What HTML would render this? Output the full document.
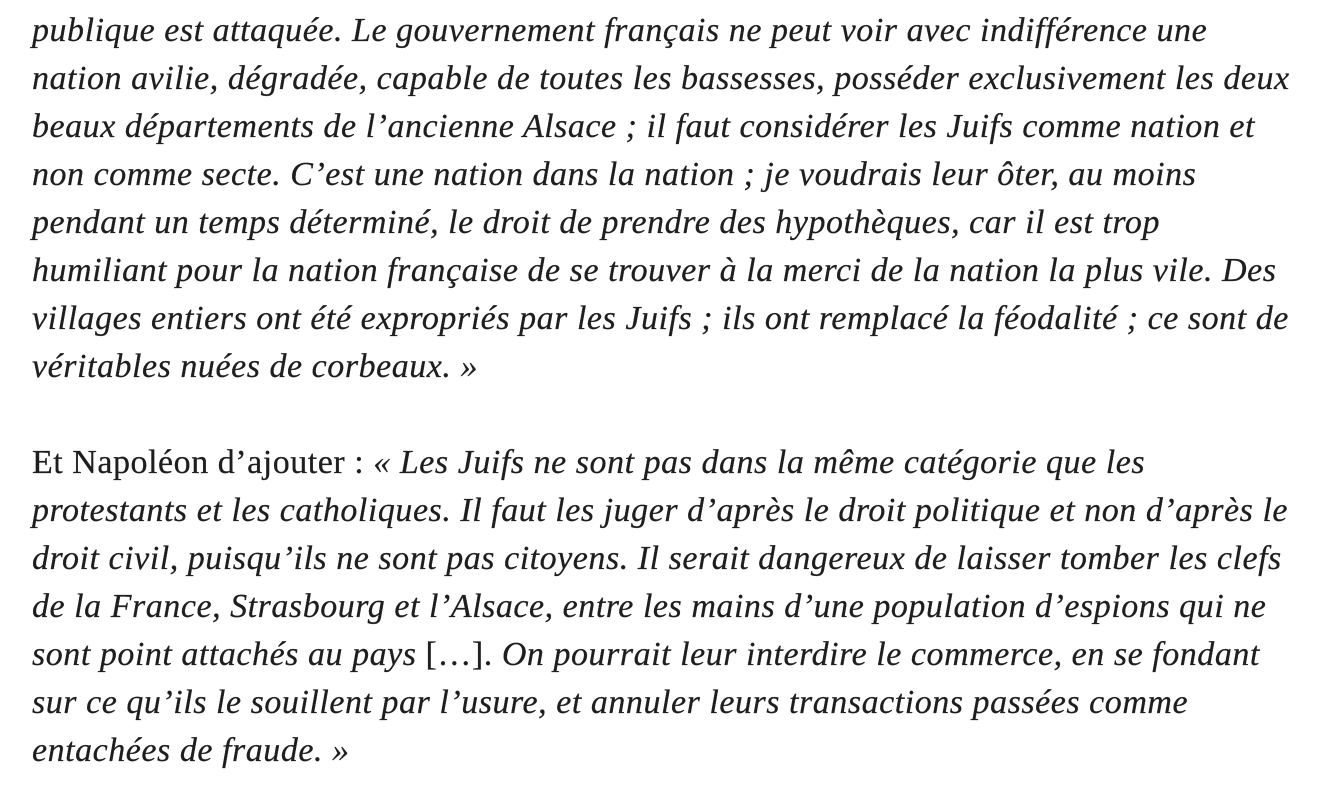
<!DOCTYPE html>
<html><head><meta charset="utf-8"><style>
html,body{margin:0;padding:0;background:#fff;width:1342px;height:796px;overflow:hidden}
.w{position:absolute;left:32px;top:7px;font-family:"Liberation Serif",serif;font-size:34px;line-height:48px;color:#1e1e1e;letter-spacing:0.53px;-webkit-text-stroke:0.25px #1e1e1e}
.l{white-space:nowrap;height:48px}
i{font-style:italic}
</style></head><body><div class="w">
<div class="l"><i>publique est attaquée. Le gouvernement français ne peut voir avec indifférence une</i></div>
<div class="l"><i>nation avilie, dégradée, capable de toutes les bassesses, posséder exclusivement les deux</i></div>
<div class="l"><i>beaux départements de l’ancienne Alsace ; il faut considérer les Juifs comme nation et</i></div>
<div class="l"><i>non comme secte. C’est une nation dans la nation ; je voudrais leur ôter, au moins</i></div>
<div class="l"><i>pendant un temps déterminé, le droit de prendre des hypothèques, car il est trop</i></div>
<div class="l"><i>humiliant pour la nation française de se trouver à la merci de la nation la plus vile. Des</i></div>
<div class="l"><i>villages entiers ont été expropriés par les Juifs ; ils ont remplacé la féodalité ; ce sont de</i></div>
<div class="l"><i>véritables nuées de corbeaux. »</i></div>
<div class="l"></div>
<div class="l">Et Napoléon d’ajouter : <i>« Les Juifs ne sont pas dans la même catégorie que les</i></div>
<div class="l"><i>protestants et les catholiques. Il faut les juger d’après le droit politique et non d’après le</i></div>
<div class="l"><i>droit civil, puisqu’ils ne sont pas citoyens. Il serait dangereux de laisser tomber les clefs</i></div>
<div class="l"><i>de la France, Strasbourg et l’Alsace, entre les mains d’une population d’espions qui ne</i></div>
<div class="l"><i>sont point attachés au pays</i> […]. <i>On pourrait leur interdire le commerce, en se fondant</i></div>
<div class="l"><i>sur ce qu’ils le souillent par l’usure, et annuler leurs transactions passées comme</i></div>
<div class="l"><i>entachées de fraude. »</i></div>
</div></body></html>
